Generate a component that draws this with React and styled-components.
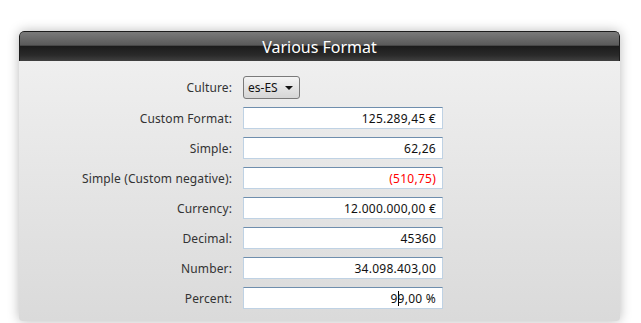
import { Fragment } from "react";
import styled, { createGlobalStyle } from "styled-components";

const Global = createGlobalStyle`
  body {
    margin: 0;
    background: #fff;
    font-family: "Noto Sans", "DejaVu Sans", sans-serif;
  }
`;

const Page = styled.div`
  padding: 31px 21px 0 19px;
  height: 323px;
  box-sizing: border-box;
  overflow: hidden;
`;

const Panel = styled.div`
  width: 601px;
  border-radius: 5px 5px 3px 3px;
  box-shadow: 0 0 12px rgba(0, 0, 0, 0.28);
  overflow: hidden;
`;

const Header = styled.div`
  height: 30px;
  display: flex;
  align-items: center;
  justify-content: center;
  color: #fff;
  font-size: 16px;
  border: 1px solid #1c1c1c;
  border-bottom: none;
  border-radius: 5px 5px 0 0;
  box-sizing: border-box;
  background: linear-gradient(
    to bottom,
    #7a7a7a 0%,
    #5a5a5a 45%,
    #1c1c1c 50%,
    #2a2a2a 80%,
    #404040 100%
  );
`;

const Body = styled.div`
  background: linear-gradient(to bottom, #efefef 0%, #dadada 100%);
  padding: 15px 0 12px;
  display: grid;
  grid-template-columns: 213px 200px;
  column-gap: 11px;
  row-gap: 8px;
  align-items: center;
`;

const Label = styled.div`
  text-align: right;
  font-size: 12px;
  letter-spacing: 0.12px;
  color: #333;
`;

const Field = styled.div`
  height: 22px;
  box-sizing: border-box;
  background: #fff;
  border: 1px solid #bfd2e4;
  border-top-color: #6f8ead;
  padding: 0 6px;
  display: flex;
  align-items: center;
  justify-content: flex-end;
  font-size: 12px;
  letter-spacing: 0.25px;
  color: ${(p) => (p.$negative ? "#ff0000" : "#111")};
`;

const Caret = styled.span`
  display: inline-block;
  width: 0;
  height: 15px;
  border-left: 1px solid #000;
  vertical-align: middle;
  margin-right: -1px;
`;

const Select = styled.div`
  width: 57px;
  height: 23px;
  box-sizing: border-box;
  border: 1px solid #7a7a7a;
  border-radius: 3px;
  background: linear-gradient(to bottom, #f4f4f4 0%, #e4e4e4 50%, #d6d6d6 100%);
  display: flex;
  align-items: center;
  padding: 0 6px 0 4px;
  font-size: 12px;
  color: #111;
  justify-content: space-between;
`;

const Arrow = styled.span`
  width: 0;
  height: 0;
  border-left: 4px solid transparent;
  border-right: 4px solid transparent;
  border-top: 4px solid #111;
`;

const rows = [
  { label: "Custom Format:", value: "125.289,45 €" },
  { label: "Simple:", value: "62,26" },
  { label: "Simple (Custom negative):", value: "(510,75)", negative: true },
  { label: "Currency:", value: "12.000.000,00 €" },
  { label: "Decimal:", value: "45360" },
  { label: "Number:", value: "34.098.403,00" },
];

export default function App() {
  return (
    <>
      <Global />
      <Page>
        <Panel>
          <Header>Various Format</Header>
          <Body>
            <Label>Culture:</Label>
            <div>
              <Select>
                es-ES <Arrow />
              </Select>
            </div>
            {rows.map((r) => (
              <Fragment key={r.label}>
                <Label>{r.label}</Label>
                <Field $negative={r.negative}>{r.value}</Field>
              </Fragment>
            ))}
            <Label>Percent:</Label>
            <Field>
              9<Caret />9,00 %
            </Field>
          </Body>
        </Panel>
      </Page>
    </>
  );
}
